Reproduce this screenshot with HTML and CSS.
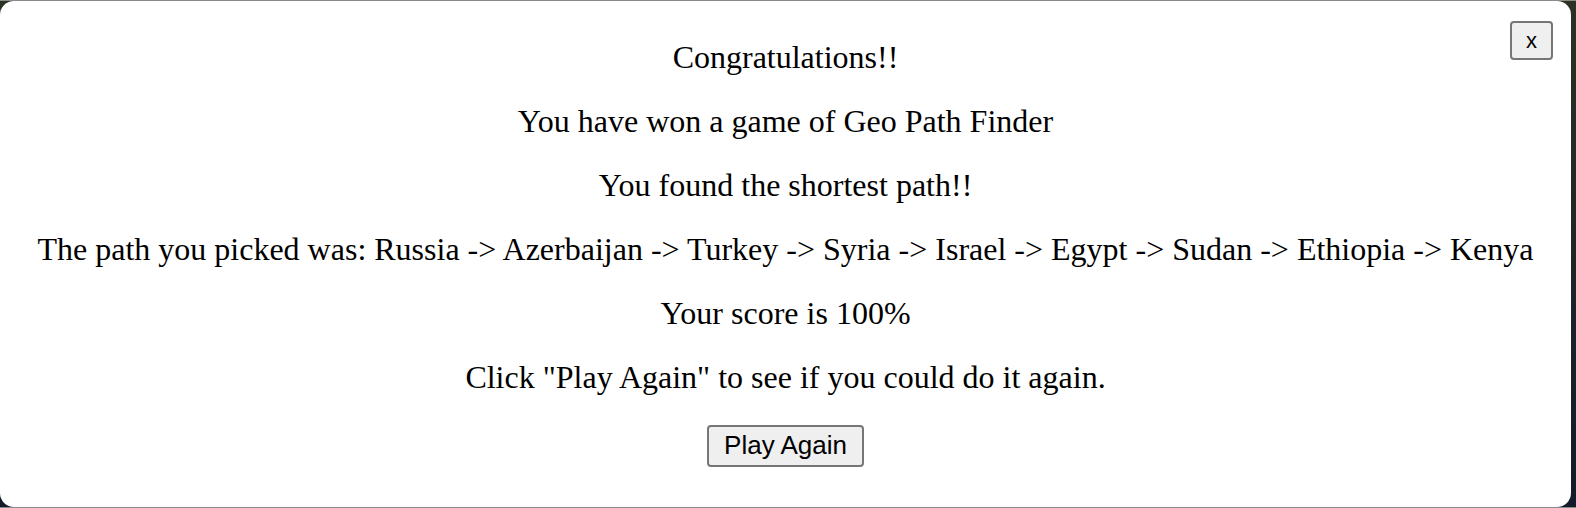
FILE: index.html
```html
<!DOCTYPE html>
<html lang="en">
<head>
<meta charset="utf-8">
<title>Geo Path Finder</title>
<link rel="stylesheet" href="styles.css">
</head>
<body>
<div class="dialog">
  <button class="close-btn" type="button">x</button>
  <div class="content">
    <p class="line">Congratulations!!</p>
    <p class="line">You have won a game of Geo Path Finder</p>
    <p class="line">You found the shortest path!!</p>
    <p class="line">The path you picked was: Russia -&gt; Azerbaijan -&gt; Turkey -&gt; Syria -&gt; Israel -&gt; Egypt -&gt; Sudan -&gt; Ethiopia -&gt; Kenya</p>
    <p class="line">Your score is 100%</p>
    <p class="line">Click "Play Again" to see if you could do it again.</p>
    <button class="play-btn" type="button">Play Again</button>
  </div>
</div>
</body>
</html>
```

FILE: styles.css
```css
html, body {
  margin: 0;
  padding: 0;
  height: 100%;
}
body {
  background: linear-gradient(180deg, #2c3222 0%, #1f2526 50%, #121a2b 100%);
  border-top: 1px solid #8a8a8a;
  border-bottom: 1px solid #8a8a8a;
  box-sizing: border-box;
  display: flex;
  overflow: hidden;
}
.dialog {
  position: relative;
  width: 1571px;
  height: 100%;
  background: #ffffff;
  border-radius: 14px;
  box-sizing: border-box;
  font-family: "Liberation Serif", "Times New Roman", serif;
  color: #000;
}
.content {
  display: flex;
  flex-direction: column;
  align-items: center;
  padding-top: 40px;
}
.line {
  margin: 0 0 32px 0;
  font-size: 32px;
  line-height: 32px;
  text-align: center;
  white-space: nowrap;
}
.play-btn {
  font-family: "Liberation Sans", Arial, sans-serif;
  font-size: 26px;
  color: #000;
  background: #efefef;
  border: 2px solid #767676;
  border-radius: 4px;
  padding: 3px 15px 4px;
  height: 42px;
  margin-top: 0;
}
.close-btn {
  position: absolute;
  top: 20px;
  right: 18px;
  width: 43px;
  height: 39px;
  font-family: "Liberation Sans", Arial, sans-serif;
  font-size: 22px;
  color: #000;
  background: #efefef;
  border: 2px solid #767676;
  border-radius: 4px;
  padding: 0;
}
```
